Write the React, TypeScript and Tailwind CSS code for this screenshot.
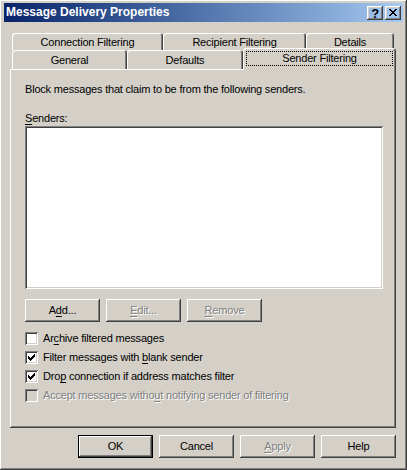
import React from "react";

const raised =
  "shadow-[inset_-1px_-1px_#404040,inset_1px_1px_#ffffff,inset_-2px_-2px_#808080,inset_2px_2px_#d4d0c8]";
const sunken =
  "shadow-[inset_1px_1px_#808080,inset_-1px_-1px_#ffffff,inset_2px_2px_#404040,inset_-2px_-2px_#d4d0c8]";
const dim = "text-[#808080] [text-shadow:1px_1px_0_#ffffff]";

function U({ children }: { children: React.ReactNode }) {
  return <span className="underline underline-offset-[2px]">{children}</span>;
}

function Btn({
  children,
  disabled,
  def,
}: {
  children: React.ReactNode;
  disabled?: boolean;
  def?: boolean;
}) {
  if (def) {
    return (
      <div className="w-[75px] h-[23px] border border-black">
        <div className={`w-full h-full flex items-center justify-center ${raised}`}>{children}</div>
      </div>
    );
  }
  return (
    <div
      className={`w-[75px] h-[23px] flex items-center justify-center ${raised} ${disabled ? dim : ""}`}
    >
      {children}
    </div>
  );
}

function Check({
  checked,
  disabled,
  children,
}: {
  checked?: boolean;
  disabled?: boolean;
  children: React.ReactNode;
}) {
  return (
    <div className="flex items-center h-[13px] gap-[5px]">
      <div
        className={`w-[13px] h-[13px] relative ${sunken} ${disabled ? "bg-[#d4d0c8]" : "bg-white"}`}
      >
        {checked && (
          <svg width="7" height="7" viewBox="0 0 7 7" className="absolute left-[3px] top-[3px]" shapeRendering="crispEdges">
            <path d="M0 2h1v3H0z M1 3h1v3H1z M2 4h1v3H2z M3 3h1v3H3z M4 2h1v3H4z M5 1h1v3H5z M6 0h1v3H6z" fill="#000" />
          </svg>
        )}
      </div>
      <span className={disabled ? dim : ""}>{children}</span>
    </div>
  );
}

function Tab({ w, children }: { w: string; children: React.ReactNode }) {
  return (
    <div
      className={`${w} h-full pt-[2px] flex items-center justify-center rounded-t-[3px] shadow-[inset_1px_1px_#ffffff,inset_-1px_0_#404040,inset_-2px_0_#808080]`}
    >
      {children}
    </div>
  );
}

export default function App() {
  return (
    <div
      className={`w-[407px] h-[470px] bg-[#d4d0c8] flex flex-col px-[4px] pt-[3px] text-[11px] leading-[13px] tracking-[-0.2px] text-black font-['Liberation_Sans',Arial,sans-serif] ${raised}`}
    >
      {/* title bar */}
      <div className="h-[19px] flex items-center pl-[2px] pr-[2px] bg-gradient-to-r from-[#0a246a] to-[#a6caf0]">
        <span className="text-white font-bold text-[12px] tracking-normal">Message Delivery Properties</span>
        <div className="ml-auto flex gap-[2px]">
          <div className={`w-[16px] h-[14px] pt-[1px] flex items-center justify-center font-bold text-[13px] ${raised}`}>
            ?
          </div>
          <div className={`w-[16px] h-[14px] flex items-center justify-center ${raised}`}>
            <svg width="8" height="7" viewBox="0 0 8 7" shapeRendering="crispEdges">
              <path
                d="M0 0h2v1h1v1h2v-1h1v-1h2v1h-1v1h-1v1h-1v1h1v1h1v1h1v1h-2v-1h-1v-1h-2v1h-1v1h-2v-1h1v-1h1v-1h1v-1h-1v-1h-1v-1h-1z"
                fill="#000"
              />
            </svg>
          </div>
        </div>
      </div>

      {/* tabs */}
      <div className="ml-[8px] mt-[11px] h-[17px] flex">
        <Tab w="w-[151px]">Connection Filtering</Tab>
        <Tab w="w-[143px]">Recipient Filtering</Tab>
        <Tab w="w-[88px]">Details</Tab>
      </div>
      <div className="ml-[6px] h-[19px] flex items-end">
        <div className="w-[2px]" />
        <Tab w="w-[115px]">General</Tab>
        <Tab w="w-[116px]">Defaults</Tab>
        <div className="relative z-10 w-[153px] h-[22px] -mb-[1px] bg-[#d4d0c8] rounded-t-[3px] shadow-[inset_1px_1px_#ffffff,inset_-1px_0_#404040,inset_-2px_0_#808080] p-[3px] pb-[4px]">
          <div className="w-full h-full border border-dotted border-black flex items-center justify-center">
            Sender Filtering
          </div>
        </div>
      </div>

      {/* panel */}
      <div className={`ml-[6px] w-[386px] h-[359px] pl-[15px] pt-[14px] flex flex-col ${raised}`}>
        <div>Block messages that claim to be from the following senders.</div>
        <div className="mt-[16px]">
          <U>S</U>enders:
        </div>
        <div className={`mt-[1px] w-[358px] h-[163px] bg-white ${sunken}`} />
        <div className="mt-[10px] flex gap-[6px]">
          <Btn>
            A<U>d</U>d...
          </Btn>
          <Btn disabled>
            <U>E</U>dit...
          </Btn>
          <Btn disabled>
            <U>R</U>emove
          </Btn>
        </div>
        <div className="mt-[10px] flex flex-col gap-[6px]">
          <Check>
            Ar<U>c</U>hive filtered messages
          </Check>
          <Check checked>
            Filter messages with <U>b</U>lank sender
          </Check>
          <Check checked>
            Dro<U>p</U> connection if address matches filter
          </Check>
          <Check disabled>
            Accept messages witho<U>u</U>t notifying sender of filtering
          </Check>
        </div>
      </div>

      {/* dialog buttons */}
      <div className="mt-[7px] mr-[7px] flex justify-end gap-[6px]">
        <Btn def>OK</Btn>
        <Btn>Cancel</Btn>
        <Btn disabled>
          <U>A</U>pply
        </Btn>
        <Btn>Help</Btn>
      </div>
    </div>
  );
}
